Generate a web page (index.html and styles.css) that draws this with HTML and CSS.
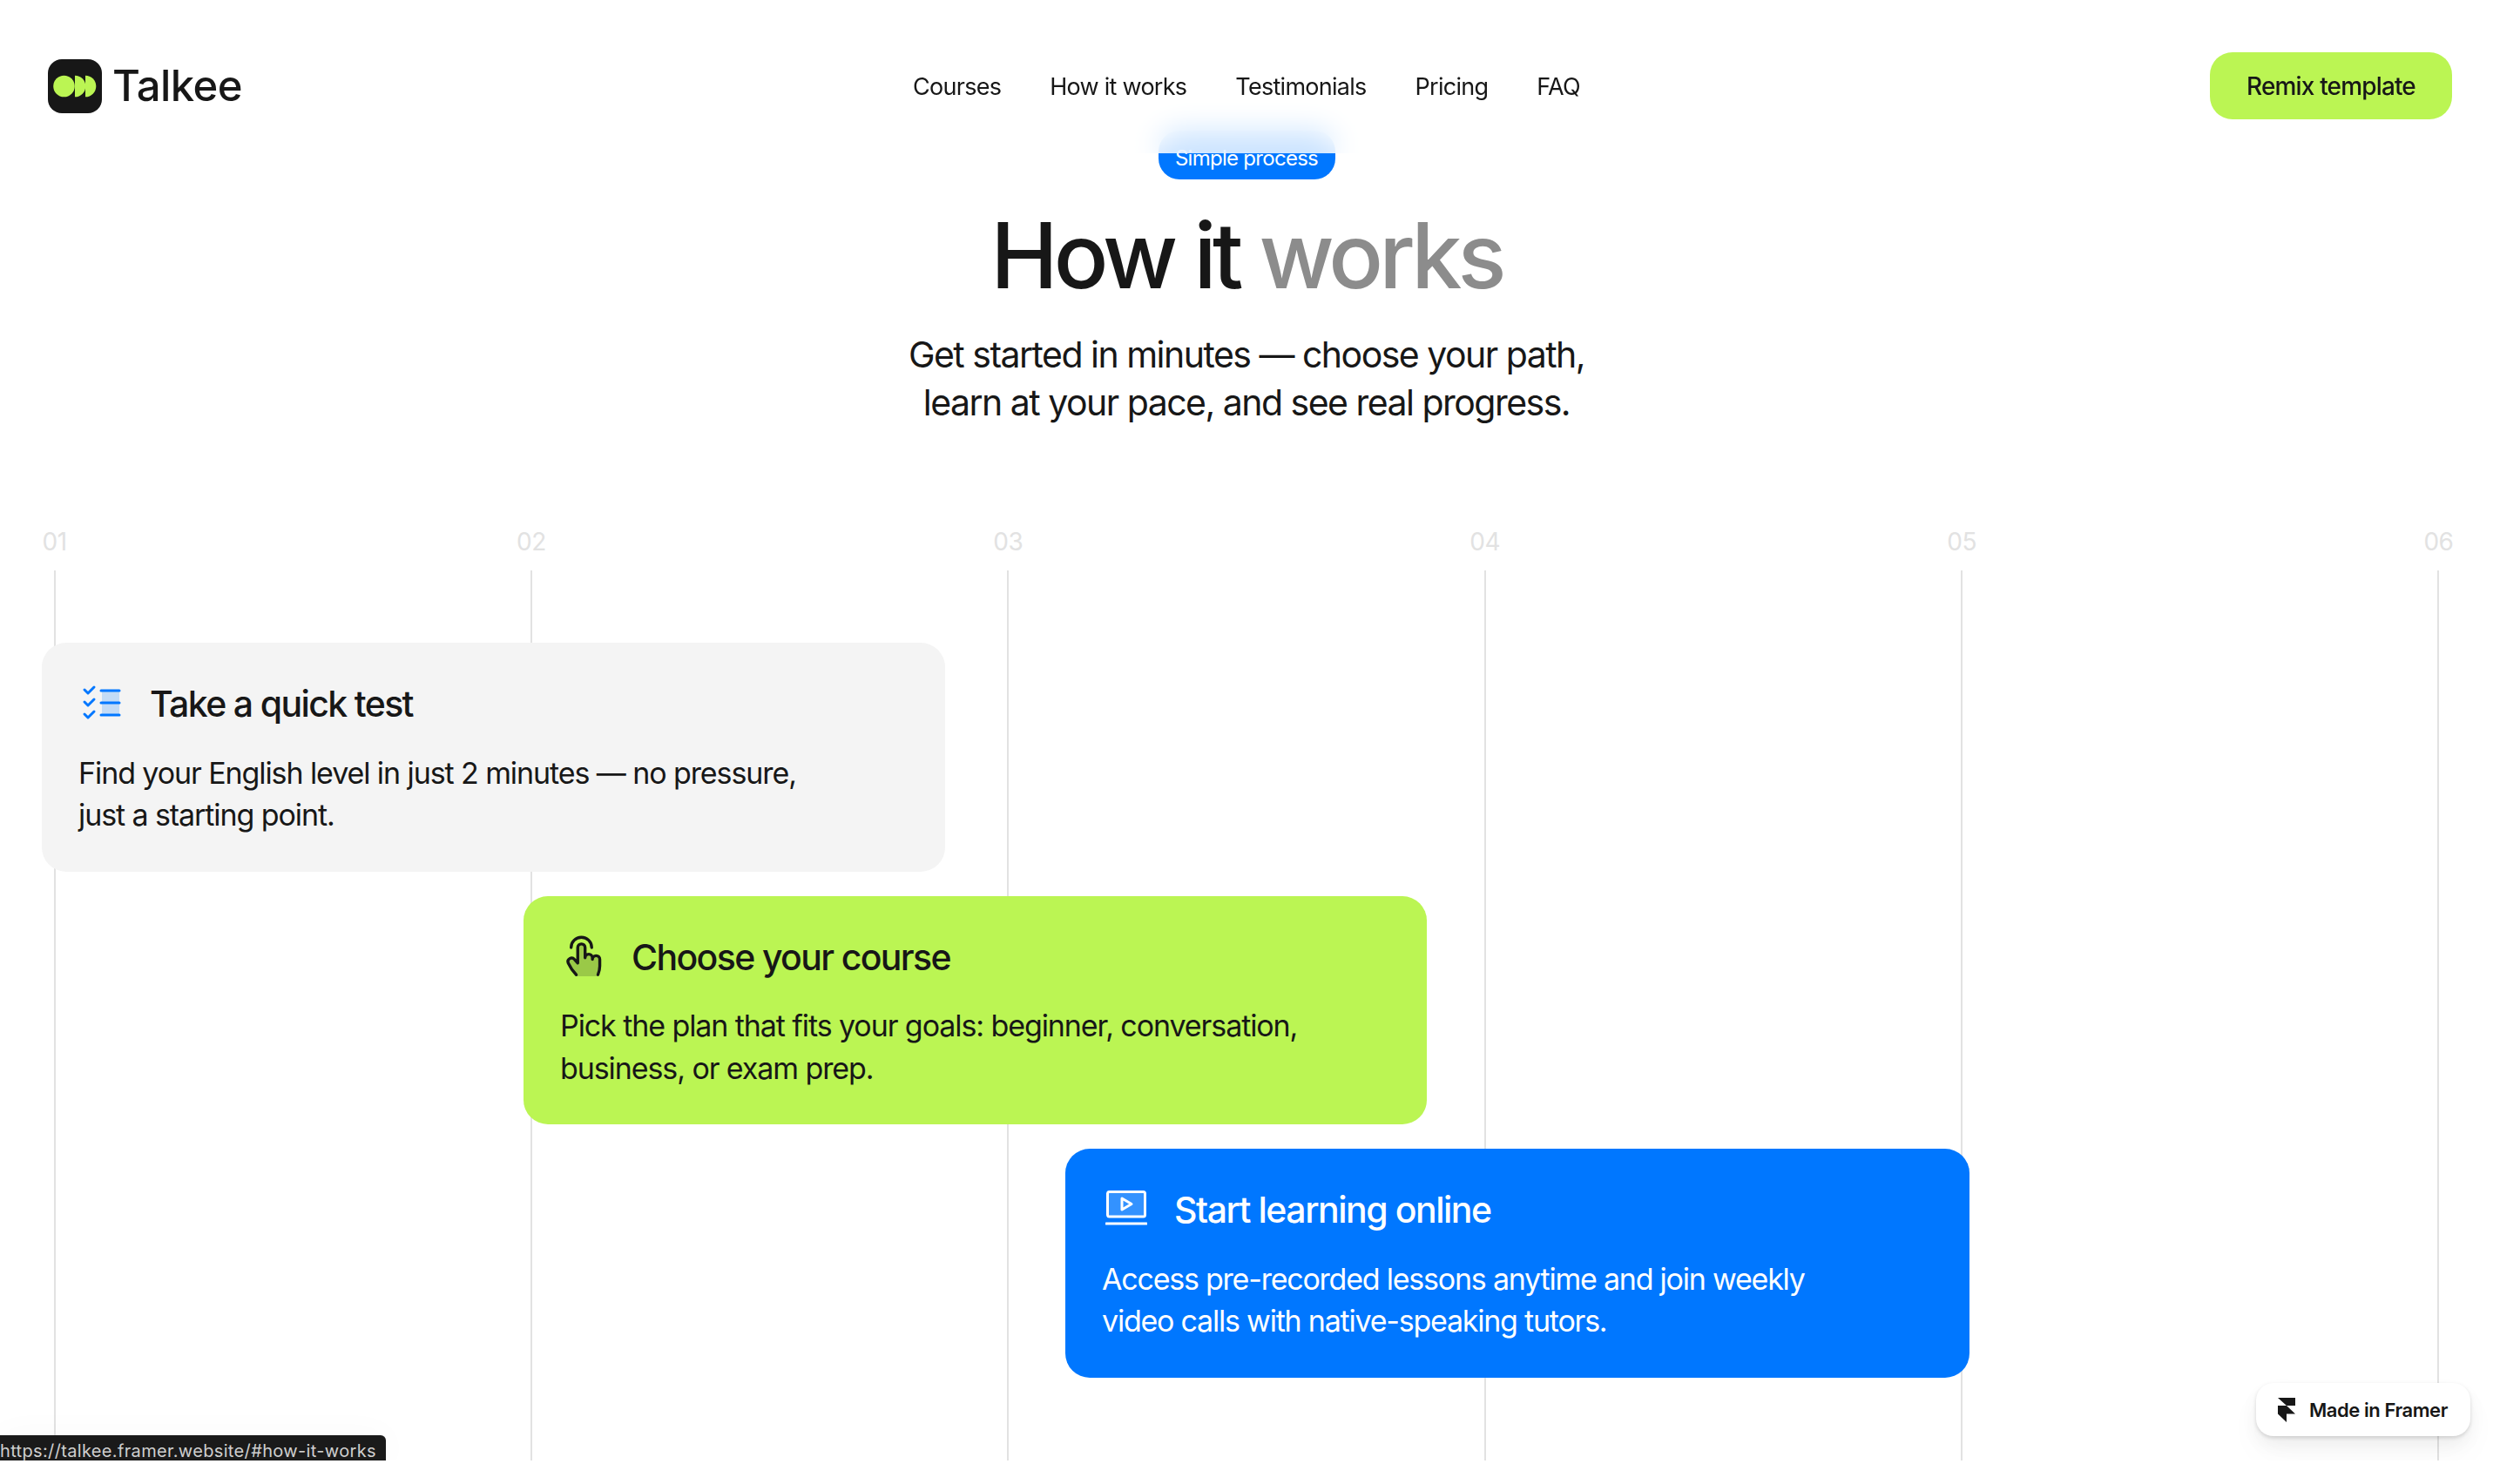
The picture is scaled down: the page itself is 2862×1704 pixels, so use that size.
FILE: index.html
```html
<!DOCTYPE html>
<html lang="en">
<head>
<meta charset="utf-8">
<title>Talkee — How it works</title>
<link rel="stylesheet" href="styles.css">
</head>
<body>
<div class="viewport">
  <header class="header">
    <a class="brand" href="#">
      <svg class="brand-mark" viewBox="0 0 62 62" aria-hidden="true">
        <rect width="62" height="62" rx="16" fill="#171717"/>
        <circle cx="18.5" cy="31" r="12.3" fill="#bbf553"/>
        <path d="M31 18.7a12.3 12.3 0 0 1 0 24.6z" fill="#bbf553"/>
        <path d="M43 18.7a12.3 12.3 0 0 1 0 24.6z" fill="#bbf553"/>
      </svg>
      <span class="brand-name">Talkee</span>
    </a>
    <nav class="nav">
      <a href="#">Courses</a>
      <a href="#">How it works</a>
      <a href="#">Testimonials</a>
      <a href="#">Pricing</a>
      <a href="#">FAQ</a>
    </nav>
    <div class="header-end"><a class="remix" href="#">Remix template</a></div>
  </header>

  <main class="main">
    <section class="hero">
      <span class="pill">Simple process</span>
      <h1 class="title">How it <span class="title-muted">works</span></h1>
      <p class="lead">Get started in minutes — choose your path,<br>learn at your pace, and see real progress.</p>
    </section>

    <section class="timeline">
      <div class="ticks">
        <div class="tick"><span>01</span><i></i></div>
        <div class="tick"><span>02</span><i></i></div>
        <div class="tick"><span>03</span><i></i></div>
        <div class="tick"><span>04</span><i></i></div>
        <div class="tick"><span>05</span><i></i></div>
        <div class="tick"><span>06</span><i></i></div>
      </div>
      <div class="cards">
        <article class="card card-grey">
          <div class="card-head">
            <svg class="icon" viewBox="0 0 48 48" aria-hidden="true">
              <rect x="23" y="9" width="20" height="28" fill="#0077ff" opacity=".2"/>
              <path d="M22 9h21M22 23h21M22 37h21" fill="none" stroke="#0077ff" stroke-width="3" stroke-linecap="round"/>
              <path d="M3 8l4 4 7-7M3 22l4 4 7-7M3 36l4 4 7-7" fill="none" stroke="#0077ff" stroke-width="3" stroke-linecap="round" stroke-linejoin="round"/>
            </svg>
            <h2>Take a quick test</h2>
          </div>
          <p>Find your English level in just 2 minutes — no pressure,<br>just a starting point.</p>
        </article>
        <article class="card card-green">
          <div class="card-head">
            <svg class="icon icon-hand" viewBox="0 0 256 256" aria-hidden="true">
              <path d="M96 160V76a20 20 0 0 1 40 0v56a20 20 0 0 1 40 0v8a20 20 0 0 1 40 0v36c0 24-6 40-14 56H88c-20-20-30-34-44-64a20 20 0 0 1 34-20z" fill="#171717" opacity=".2"/>
              <path d="M60 76a56 56 0 0 1 112 0" fill="none" stroke="#171717" stroke-width="16" stroke-linecap="round"/>
              <path d="M88 224c-20-20-30-34-44-64a20 20 0 0 1 34-20l18 20V76a20 20 0 0 1 40 0v56a20 20 0 0 1 40 0v8a20 20 0 0 1 40 0v36c0 20-4 32-10 48" fill="none" stroke="#171717" stroke-width="16" stroke-linecap="round" stroke-linejoin="round"/>
            </svg>
            <h2>Choose your course</h2>
          </div>
          <p>Pick the plan that fits your goals: beginner, conversation,<br>business, or exam prep.</p>
        </article>
        <article class="card card-blue">
          <div class="card-head">
            <svg class="icon" viewBox="0 0 48 48" aria-hidden="true">
              <rect x="2.500" y="3.500" width="43" height="28.500" rx="2" fill="#fff" fill-opacity=".2" stroke="#fff" stroke-width="3"/>
              <path d="M1 40h46" stroke="#fff" stroke-width="3" stroke-linecap="round"/>
              <path d="M19 11l11 6.500-11 6.500z" fill="none" stroke="#fff" stroke-width="3" stroke-linejoin="round"/>
            </svg>
            <h2>Start learning online</h2>
          </div>
          <p>Access pre-recorded lessons anytime and join weekly<br>video calls with native-speaking tutors.</p>
        </article>
      </div>
    </section>
  </main>

  <a class="status" href="#">https://talkee.framer.website/#how-it-works</a>
  <a class="badge" href="#">
    <svg class="badge-logo" viewBox="0 0 20 28" aria-hidden="true">
      <path d="M0 0h20v9H10zM0 9h10l10 9.500H10V28L0 18.500z" fill="#171717"/>
    </svg>
    <span>Made in Framer</span>
  </a>
</div>
</body>
</html>
```

FILE: styles.css
```css
* { box-sizing: border-box; }
html, body { margin: 0; background: #fff; }
body { font-family: Inter, "Liberation Sans", sans-serif; color: #171717; }
a { color: inherit; text-decoration: none; }
h1, h2, p { margin: 0; }

.viewport { position: relative; height: 1677px; overflow: hidden; }

.header {
  position: absolute; top: 0; left: 0; right: 0; z-index: 5;
  height: 176px; padding: 60px 47px 0;
  display: grid; grid-template-columns: 1fr auto 1fr; align-items: start;
  background: rgba(255,255,255,.8);
  backdrop-filter: blur(16px);
}
.brand { display: flex; align-items: center; gap: 12px; height: 77px; margin-left: 8px; }
.brand-mark { width: 62px; height: 62px; }
.brand-name { font-size: 49px; font-weight: 500; letter-spacing: -0.012em; }
.nav { display: flex; gap: 56px; height: 77px; padding-top: 2px; align-items: center; font-size: 27px; letter-spacing: -0.027em; }
.header-end { display: flex; justify-content: flex-end; }
.remix {
  display: flex; align-items: center; justify-content: center;
  width: 278px; height: 77px; border-radius: 26px;
  background: #bbf553; font-size: 28px; font-weight: 500; letter-spacing: -0.03em;
}

.hero { padding-top: 150px; display: flex; flex-direction: column; align-items: center; text-align: center; }
.pill {
  display: flex; align-items: center; justify-content: center;
  width: 203px; height: 56px; padding-top: 6px; border-radius: 24px;
  background: #0077ff; color: #fff; font-size: 24px; letter-spacing: -0.03em;
}
.title { margin-top: 27px; font-size: 104px; line-height: 120px; font-weight: 500; letter-spacing: -0.046em; }
.title-muted { color: #8c8c8c; }
.lead { margin-top: 27px; font-size: 41px; line-height: 55px; letter-spacing: -0.037em; }

.timeline { position: relative; margin: 120px 47px 0; height: 1067px; }
.ticks { position: absolute; inset: 0; display: flex; justify-content: space-between; }
.tick { width: 31px; display: flex; flex-direction: column; align-items: center; }
.tick span { height: 45px; font-size: 28px; line-height: 24px; letter-spacing: -0.02em; color: #e2e2e2; }
.tick i { flex: 1; width: 2px; background: #e2e2e2; }

.cards { position: relative; padding: 128px 0 0 1px; display: flex; flex-direction: column; gap: 28px; }
.card { width: 1037px; height: 262.500px; padding: 42px 42px 0; border-radius: 28px; }
.card-head { display: flex; align-items: center; gap: 30px; height: 56px; padding-left: 4px; }
.card h2 { font-size: 41px; font-weight: 500; letter-spacing: -0.04em; }
.card p { margin-top: 27.500px; font-size: 34px; line-height: 48.500px; letter-spacing: -0.032em; }
.icon { width: 48px; height: 48px; flex: none; }
.icon-hand { width: 54px; height: 54px; margin: 0 -2px 0 -4px; }
.card-grey { background: #f4f4f4; }
.card-green { background: #bbf553; margin-left: 553px; }
.card-blue { background: #0077ff; color: #fff; margin-left: 1175px; width: 1038px; }
.card-blue .card-head { gap: 31px; }
.card-blue h2 { letter-spacing: -0.036em; }
.card-blue p { letter-spacing: -0.036em; }

.status {
  position: absolute; left: 0; bottom: 0; z-index: 6;
  width: 443px; height: 29px; padding-top: 4px; border-top-right-radius: 6px;
  background: #1a1a1a; color: #cfcfcf; font-size: 20px; line-height: 29px; letter-spacing: .35px; white-space: nowrap;
  overflow: hidden; box-shadow: 0 0 40px rgba(0,0,0,.03);
}
.badge {
  position: absolute; right: 26px; bottom: 28px; z-index: 6;
  width: 246px; height: 61px; padding-left: 25px; border-radius: 20px;
  display: flex; align-items: center; gap: 16px;
  background: #fff; font-size: 22px; font-weight: 600; letter-spacing: -0.02em;
  box-shadow: 0 2px 4px rgba(0,0,0,.14), 0 10px 20px rgba(0,0,0,.05), 0 20px 40px rgba(0,0,0,.03);
}
.badge-logo { width: 20px; height: 28px; flex: none; }
```
